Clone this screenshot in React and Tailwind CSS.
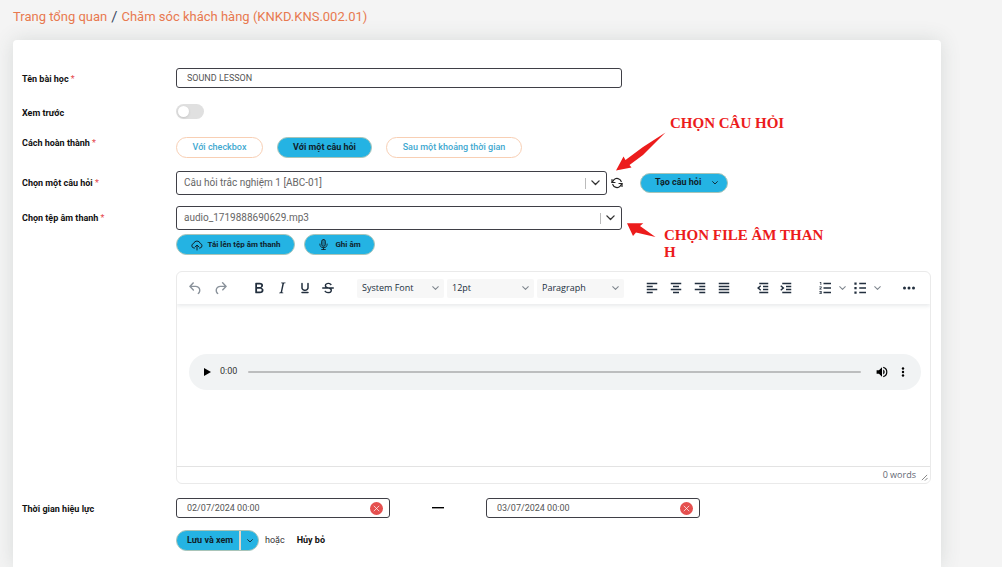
import React, { useState } from "react";

const ICONS = {
  undo: "M6.4 8H12c3.7 0 6.2 2 6.8 5.1.6 2.7-.4 5.6-2.3 6.8a1 1 0 0 1-1-1.8c1.1-.6 1.8-2.7 1.4-4.6-.5-2.1-2.1-3.5-4.9-3.5H6.4l3.3 3.3a1 1 0 1 1-1.4 1.4l-5-5a1 1 0 0 1 0-1.4l5-5a1 1 0 0 1 1.4 1.4L6.4 8Z",
  redo: "M17.6 10H12c-2.8 0-4.4 1.4-4.9 3.5-.4 2 .3 4 1.4 4.6a1 1 0 1 1-1 1.8c-2-1.2-2.9-4.1-2.3-6.8.6-3 3-5.1 6.8-5.1h5.6l-3.3-3.3a1 1 0 1 1 1.4-1.4l5 5a1 1 0 0 1 0 1.4l-5 5a1 1 0 0 1-1.4-1.4l3.3-3.3Z",
  bold: "M7.8 19c-.3 0-.5 0-.6-.2l-.2-.5V5.7c0-.2 0-.4.2-.5l.6-.2h5c1.5 0 2.7.3 3.5 1 .7.6 1.1 1.4 1.1 2.5a3 3 0 0 1-.6 1.9c-.4.6-1 1-1.6 1.2.4.1.9.3 1.3.6s.8.7 1 1.2c.4.4.5 1 .5 1.6 0 1.3-.4 2.3-1.3 3-.8.7-2.1 1-3.8 1H7.8Zm5-8.3c.6 0 1.2-.1 1.6-.5.4-.3.6-.7.6-1.3 0-1.1-.8-1.7-2.3-1.7H9.3v3.5h3.4Zm.5 6c.7 0 1.3-.1 1.7-.4.4-.4.6-.9.6-1.5s-.2-1-.7-1.4c-.4-.3-1-.4-2-.4H9.4v3.8h4Z",
  italic: "m16.7 4.7-.1.9h-.3c-.6 0-1 0-1.4.3-.3.3-.4.6-.5 1.1l-2.1 9.8v.6c0 .5.4.8 1.4.8h.2l-.2.8H8l.2-.8h.2c1.1 0 1.8-.5 2-1.5l2-9.8.1-.5c0-.6-.4-.8-1.4-.8h-.3l.2-.9h5.8Z",
  underline: "M16 5c.6 0 1 .4 1 1v5.5a4 4 0 0 1-.4 1.8l-1 1.4a5.3 5.3 0 0 1-5.5 1 5 5 0 0 1-1.6-1c-.5-.4-.8-.9-1.1-1.4a4 4 0 0 1-.4-1.8V6c0-.6.4-1 1-1s1 .4 1 1v5.5c0 .3 0 .6.2 1l.6.7a3.3 3.3 0 0 0 2.2.8 3.4 3.4 0 0 0 2.2-.8c.3-.2.4-.5.6-.8l.2-.9V6c0-.6.4-1 1-1ZM8 17h8c.6 0 1 .4 1 1s-.4 1-1 1H8a1 1 0 0 1 0-2Z",
  strike: "M15.6 8.5c-.5-.7-1-1.1-1.3-1.3-.6-.4-1.3-.6-2-.6-2.7 0-2.8 1.7-2.8 2.1 0 1.6 1.8 2 3.2 2.3 4.4.9 4.6 2.8 4.6 3.9 0 1.4-.7 4.1-5 4.1A6.2 6.2 0 0 1 7 16.4l1.5-1.1c.4.6 1.6 2 3.7 2 1.6 0 2.5-.4 3-1.2.4-.8.3-2-.8-2.6-.7-.4-1.6-.7-2.9-1-1-.2-3.9-.8-3.9-3.6C7.6 6 10.3 5 12.4 5c2.9 0 4.2 1.6 4.7 2.4l-1.5 1.1ZM5 11h14a1 1 0 0 1 0 2H5a1 1 0 0 1 0-2Z",
  left: "M5 5h14v2H5zM5 9h8v2H5zM5 13h14v2H5zM5 17h8v2H5z",
  center: "M5 5h14v2H5zM8 9h8v2H8zM5 13h14v2H5zM8 17h8v2H8z",
  right: "M5 5h14v2H5zM11 9h8v2h-8zM5 13h14v2H5zM11 17h8v2h-8z",
  justify: "M5 5h14v2H5zM5 9h14v2H5zM5 13h14v2H5zM5 17h14v2H5z",
  outdent: "M7 5h12v2H7zM12 9h7v2h-7zM12 13h7v2h-7zM7 17h12v2H7zM8.4 8.2 9.6 9.8 7 12l2.6 2.2-1.2 1.6L4 12Z",
  indent: "M7 5h12v2H7zM12 9h7v2h-7zM12 13h7v2h-7zM7 17h12v2H7zM5.6 8.2 4.4 9.8 7 12l-2.6 2.2 1.2 1.6L10 12Z",
  numbers: "M10 5h10v2H10zM10 11h10v2H10zM10 17h10v2H10zM5 4h2v4H6V5H5zM4.5 10H7.5v1.5L6 13h1.5v1h-3v-1L6.500 11.500V11h-2zM4.500 16h3v4h-3v-1h2v-.6h-1.500v-.8h1.500V17h-2z",
  bullets: "M11 5h9v2h-9zM11 11h9v2h-9zM11 17h9v2h-9zM4.500 4.500h3v3h-3zM4.500 10.500h3v3h-3zM4.500 16.500h3v3h-3z",
  more: "M6 10a2 2 0 1 0 0 4 2 2 0 0 0 0-4Zm12 0a2 2 0 1 0 0 4 2 2 0 0 0 0-4Zm-6 0a2 2 0 1 0 0 4 2 2 0 0 0 0-4Z",
};

function Tool({ name, label, className = "w-[23px] text-[#222f3e]", size = "size-[18px]" }) {
  return (
    <button type="button" aria-label={label} className={`flex h-6 shrink-0 items-center justify-center ${className}`}>
      <svg viewBox="0 0 24 24" className={`shrink-0 ${size}`} fill="currentColor">
        <path d={ICONS[name]} />
      </svg>
    </button>
  );
}

function Chevron({ className = "w-2" }) {
  return (
    <svg viewBox="0 0 10 6" className={`shrink-0 ${className}`} fill="none" stroke="currentColor" strokeWidth="1.500" strokeLinecap="round" strokeLinejoin="round">
      <path d="M1 1l4 4 4-4" />
    </svg>
  );
}

function ToolSelect({ label, value }) {
  return (
    <div className="flex h-[19px] w-[87px] items-center rounded-[2px] bg-[#f7f7f7] pr-[5px] text-[#222f3e]">
      <select aria-label={label} className="min-w-0 flex-1 appearance-none bg-transparent pl-[5px] font-['Open_Sans','Noto_Sans',sans-serif] text-[9px] leading-3 outline-none">
        <option>{value}</option>
      </select>
      <Chevron className="w-[7px] text-[#7f868e]" />
    </div>
  );
}

function Label({ htmlFor, required, children }) {
  return (
    <label htmlFor={htmlFor} className="text-[9px] leading-3 font-bold text-[#111]">
      {children}
      {required && <span className="font-normal text-[#e5484d]"> *</span>}
    </label>
  );
}

function Row({ className = "", align = "items-center pt-[2px]", label, htmlFor, required, children }) {
  return (
    <div className={`grid grid-cols-[154px_minmax(0,1fr)] ${className}`}>
      <div className={`flex ${align}`}>
        {label && <Label htmlFor={htmlFor} required={required}>{label}</Label>}
      </div>
      {children}
    </div>
  );
}

function BigSelect({ id, value, className }) {
  return (
    <div className={`flex h-6 items-center rounded-[3px] border border-[#3f3f46] bg-white pr-[6px] ${className}`}>
      <select id={id} className="min-w-0 flex-1 appearance-none bg-transparent pl-[7px] text-[10px] leading-3 text-[#666] outline-none">
        <option>{value}</option>
      </select>
      <span className="mr-[5px] h-[11px] w-px bg-[#bbb]" />
      <Chevron className="w-[9px] text-[#333]" />
    </div>
  );
}

function DateField({ id, label, value }) {
  return (
    <div className="flex h-5 w-[214px] items-center rounded-[3px] border border-[#3f3f46] bg-white pr-[6px]">
      <input id={id} aria-label={label} defaultValue={value} className="min-w-0 flex-1 bg-transparent pl-[10px] text-[9px] leading-3 text-[#555] outline-none" />
      <button type="button" aria-label="Xóa" className="flex size-[13px] items-center justify-center rounded-full bg-[#e5504f]">
        <svg viewBox="0 0 10 10" className="size-[7px]" stroke="white" strokeLinecap="round">
          <path d="M1.500 1.500l7 7M8.500 1.500l-7 7" />
        </svg>
      </button>
    </div>
  );
}

const OUTLINE = "h-[21px] rounded-full border border-[#f8cfb4] bg-white font-medium text-[#3fa9d0]";
const SOLID = "h-[21px] rounded-full border border-[#a9c4b8] bg-[#24b3e3] font-bold text-[#10222b]";

export default function App() {
  const [preview, setPreview] = useState(false);
  return (
    <div className="relative flex min-h-screen flex-col bg-[#f4f4f4] pr-[61px] pl-[13px] font-[Roboto,sans-serif] text-[9px]">
      <nav aria-label="Breadcrumb" className="flex h-10 items-start gap-1 pt-[9px] text-[13px] leading-4 text-[#e8794f]">
        <a href="#home">Trang tổng quan</a>
        <span className="text-[15px] text-[#3d4a63]">/</span>
        <a href="#course">Chăm sóc khách hàng (KNKD.KNS.002.01)</a>
      </nav>

      <main className="flex-1 rounded-t-[4px] bg-white pt-7 pr-[10px] pb-4 pl-[9px] shadow-[0_0_20px_rgba(60,80,75,0.15)]">
        <form onSubmit={(e) => e.preventDefault()}>
          <Row label="Tên bài học" htmlFor="name" required>
            <input id="name" defaultValue="SOUND LESSON" className="h-5 w-[446px] rounded-[3px] border border-[#3f3f46] px-[10px] text-[9px] leading-3 text-[#555] outline-none" />
          </Row>

          <Row label="Xem trước" htmlFor="preview" className="mt-4">
            <input
              id="preview"
              type="checkbox"
              role="switch"
              checked={preview}
              onChange={() => setPreview(!preview)}
              className="flex h-[15px] w-7 appearance-none items-center rounded-full bg-[#e0e0e0] px-[2px] before:size-[11px] before:rounded-full before:bg-white before:shadow-sm checked:justify-end checked:bg-[#24b3e3]"
            />
          </Row>

          <Row label="Cách hoàn thành" required align="items-start" className="mt-[18px]">
            <div className="flex gap-[14px]">
              <button type="button" className={`w-[87px] ${OUTLINE}`}>Với checkbox</button>
              <button type="button" className={`w-[95px] ${SOLID}`}>Với một câu hỏi</button>
              <button type="button" className={`w-[136px] ${OUTLINE}`}>Sau một khoảng thời gian</button>
            </div>
          </Row>

          <Row label="Chọn một câu hỏi" htmlFor="question" required align="items-center" className="mt-[13px]">
            <div className="flex items-center">
              <BigSelect id="question" value="Câu hỏi trắc nghiệm 1 [ABC-01]" className="w-[431px]" />
              <button type="button" aria-label="Tải lại" className="ml-1 text-[#222]">
                <svg viewBox="0 0 24 24" className="size-3" fill="none" stroke="currentColor" strokeWidth="2.400" strokeLinecap="round" strokeLinejoin="round">
                  <path d="M2 5v6h6M22 19v-6h-6" />
                  <path d="M20.500 9A9 9 0 0 0 5.600 5.600L2 11M22 13l-3.600 5.400A9 9 0 0 1 3.500 15" />
                </svg>
              </button>
              <button type="button" className="ml-[17px] flex h-5 w-[88px] items-center justify-between rounded-full border border-[#a9c4b8] bg-[#24b3e3] pr-[9px] pl-[14px] font-bold text-[#10222b]">
                Tạo câu hỏi
                <Chevron className="w-[6px]" />
              </button>
            </div>
          </Row>

          <Row label="Chọn tệp âm thanh" htmlFor="audio" required align="items-center" className="mt-[11px]">
            <BigSelect id="audio" value="audio_1719888690629.mp3" className="w-[446px]" />
          </Row>

          <Row className="mt-1">
            <div className="flex gap-[9px]">
              <button type="button" className={`flex w-[119px] items-center justify-center gap-[5px] ${SOLID}`}>
                <svg viewBox="0 0 24 24" className="size-3" fill="none" stroke="currentColor" strokeWidth="2" strokeLinecap="round" strokeLinejoin="round">
                  <path d="M7 18H6a4.500 4.500 0 0 1-.8-8.900A7 7 0 0 1 18.600 9 4.600 4.600 0 0 1 18 18h-1M12 22v-9M8.500 15.500 12 12l3.500 3.500" />
                </svg>
                <span className="text-[8px]">Tải lên tệp âm thanh</span>
              </button>
              <button type="button" className={`flex w-[71px] items-center justify-center gap-[6px] ${SOLID}`}>
                <svg viewBox="0 0 24 24" className="size-[11px]" fill="none" stroke="currentColor" strokeWidth="2" strokeLinecap="round">
                  <rect x="8" y="1" width="8" height="15" rx="4" fill="currentColor" fillOpacity=".35" />
                  <path d="M4 11a8 8 0 0 0 16 0M12 19v4M8 23h8" />
                </svg>
                <span className="text-[8px]">Ghi âm</span>
              </button>
            </div>
          </Row>

          <Row className="mt-4">
            <div className="overflow-hidden rounded-[6px] border border-[#eaeaea]">
              <div className="flex h-8 items-center pl-[6px] shadow-[0_2px_4px_rgba(34,47,62,0.10)]">
                <div className="flex">
                  <Tool name="undo" label="Undo" size="size-[17px]" className="w-[25px] text-[#8a929b]" />
                  <Tool name="redo" label="Redo" size="size-[17px]" className="w-[25px] text-[#8a929b]" />
                </div>
                <div className="ml-[14px] flex">
                  <Tool name="bold" label="Bold" />
                  <Tool name="italic" label="Italic" />
                  <Tool name="underline" label="Underline" />
                  <Tool name="strike" label="Strikethrough" />
                </div>
                <div className="ml-[18px] flex gap-[3px]">
                  <ToolSelect label="Font" value="System Font" />
                  <ToolSelect label="Font size" value="12pt" />
                  <ToolSelect label="Block" value="Paragraph" />
                </div>
                <div className="ml-4 flex gap-px">
                  <Tool name="left" label="Align left" />
                  <Tool name="center" label="Align center" />
                  <Tool name="right" label="Align right" />
                  <Tool name="justify" label="Justify" />
                </div>
                <div className="ml-4 flex">
                  <Tool name="outdent" label="Decrease indent" />
                  <Tool name="indent" label="Increase indent" />
                </div>
                <div className="ml-4 flex text-[#7f868e]">
                  <Tool name="numbers" label="Numbered list" />
                  <button type="button" aria-label="Numbered list styles" className="flex w-3 items-center justify-center"><Chevron className="w-[7px]" /></button>
                  <Tool name="bullets" label="Bullet list" />
                  <button type="button" aria-label="Bullet list styles" className="flex w-3 items-center justify-center"><Chevron className="w-[7px]" /></button>
                </div>
                <div className="ml-[14px] flex">
                  <Tool name="more" label="More" />
                </div>
              </div>

              <div className="h-[162px] pt-[50px] pr-[9px] pl-3">
                <div className="flex h-9 items-center rounded-full bg-[#f1f3f4] pr-3 pl-[14px] text-black">
                  <button type="button" aria-label="Play">
                    <svg viewBox="0 0 8 8" className="size-2" fill="currentColor"><path d="M1 0l7 4-7 4z" /></svg>
                  </button>
                  <span className="ml-[9px] text-[9px] text-[#333]">0:00</span>
                  <input type="range" aria-label="Seek" defaultValue="0" className="ml-[11px] h-[2px] min-w-0 flex-1 appearance-none rounded-full bg-[#bcbdbe] [&::-webkit-slider-thumb]:appearance-none" />
                  <button type="button" aria-label="Mute" className="ml-[15px]">
                    <svg viewBox="2 2 20 20" className="size-3" fill="currentColor">
                      <path d="M3 9v6h4l5 5V4L7 9H3zm13.500 3A4.500 4.500 0 0 0 14 7.970v8.050A4.500 4.500 0 0 0 16.500 12zM14 3.230v2.060a7 7 0 0 1 0 13.420v2.060a9 9 0 0 0 0-17.540z" />
                    </svg>
                  </button>
                  <button type="button" aria-label="More options" className="ml-[9px]">
                    <svg viewBox="0 0 12 12" className="size-3" fill="currentColor">
                      <circle cx="6" cy="2.500" r="1.200" /><circle cx="6" cy="6" r="1.200" /><circle cx="6" cy="9.500" r="1.200" />
                    </svg>
                  </button>
                </div>
              </div>

              <div className="flex h-[17px] items-center justify-end gap-[5px] border-t border-[#e3e3e3] pr-[2px] font-['Open_Sans','Noto_Sans',sans-serif] text-[9px] text-[#5f6772]">
                0 words
                <svg viewBox="0 0 8 8" className="mt-1 size-[7px]" stroke="#777" fill="none"><path d="M1 7l6-6M4.500 7.500l3-3" /></svg>
              </div>
            </div>
          </Row>

          <Row label="Thời gian hiệu lực" htmlFor="from" className="mt-[14px]">
            <div className="flex items-center">
              <DateField id="from" label="Thời gian bắt đầu" value="02/07/2024 00:00" />
              <span className="mx-[42px] h-[2px] w-3 border-t border-black bg-[#999]" />
              <DateField id="to" label="Thời gian kết thúc" value="03/07/2024 00:00" />
            </div>
          </Row>

          <Row className="mt-3">
            <div className="flex items-center">
              <div className="flex h-[21px] overflow-hidden rounded-full border border-[#a9c4b8] bg-[#24b3e3] text-[#10222b]">
                <button type="submit" className="w-16 border-r-2 border-[#e3d6c8] pl-1 text-[9px] font-bold">Lưu và xem</button>
                <button type="button" aria-label="Tùy chọn lưu" className="flex w-[17px] items-center justify-center"><Chevron className="w-[6px]" /></button>
              </div>
              <span className="ml-[6px] text-[9px] text-[#333]">hoặc</span>
              <a href="#cancel" className="ml-3 text-[9px] font-bold text-[#111]">Hủy bỏ</a>
            </div>
          </Row>
        </form>
      </main>

      <svg viewBox="0 0 51 41" className="absolute top-[131px] left-[615px] h-[41px] w-[51px]" fill="#ec1c1c">
        <path d="M50.500 1.500 28 16 10.500 29 8.500 25.500 1 39.500 16.500 36.500 14.500 34 28 24z" />
      </svg>
      <svg viewBox="0 0 30 16" className="absolute top-[222px] left-[627px] h-4 w-[30px]" fill="#ec1c1c">
        <path d="M0 1.300h16.300L13 4l15.500 11L9 10.500 6 14z" />
      </svg>
      <p className="absolute top-[115px] left-[670px] font-['Liberation_Serif',serif] text-[15px] leading-[17px] font-bold text-[#ec1c1c]">CHỌN CÂU HỎI</p>
      <p className="absolute top-[227px] left-[664px] w-[164px] font-['Liberation_Serif',serif] text-[15px] leading-[17px] font-bold break-all text-[#ec1c1c]">CHỌN FILE ÂM THANH</p>
    </div>
  );
}
